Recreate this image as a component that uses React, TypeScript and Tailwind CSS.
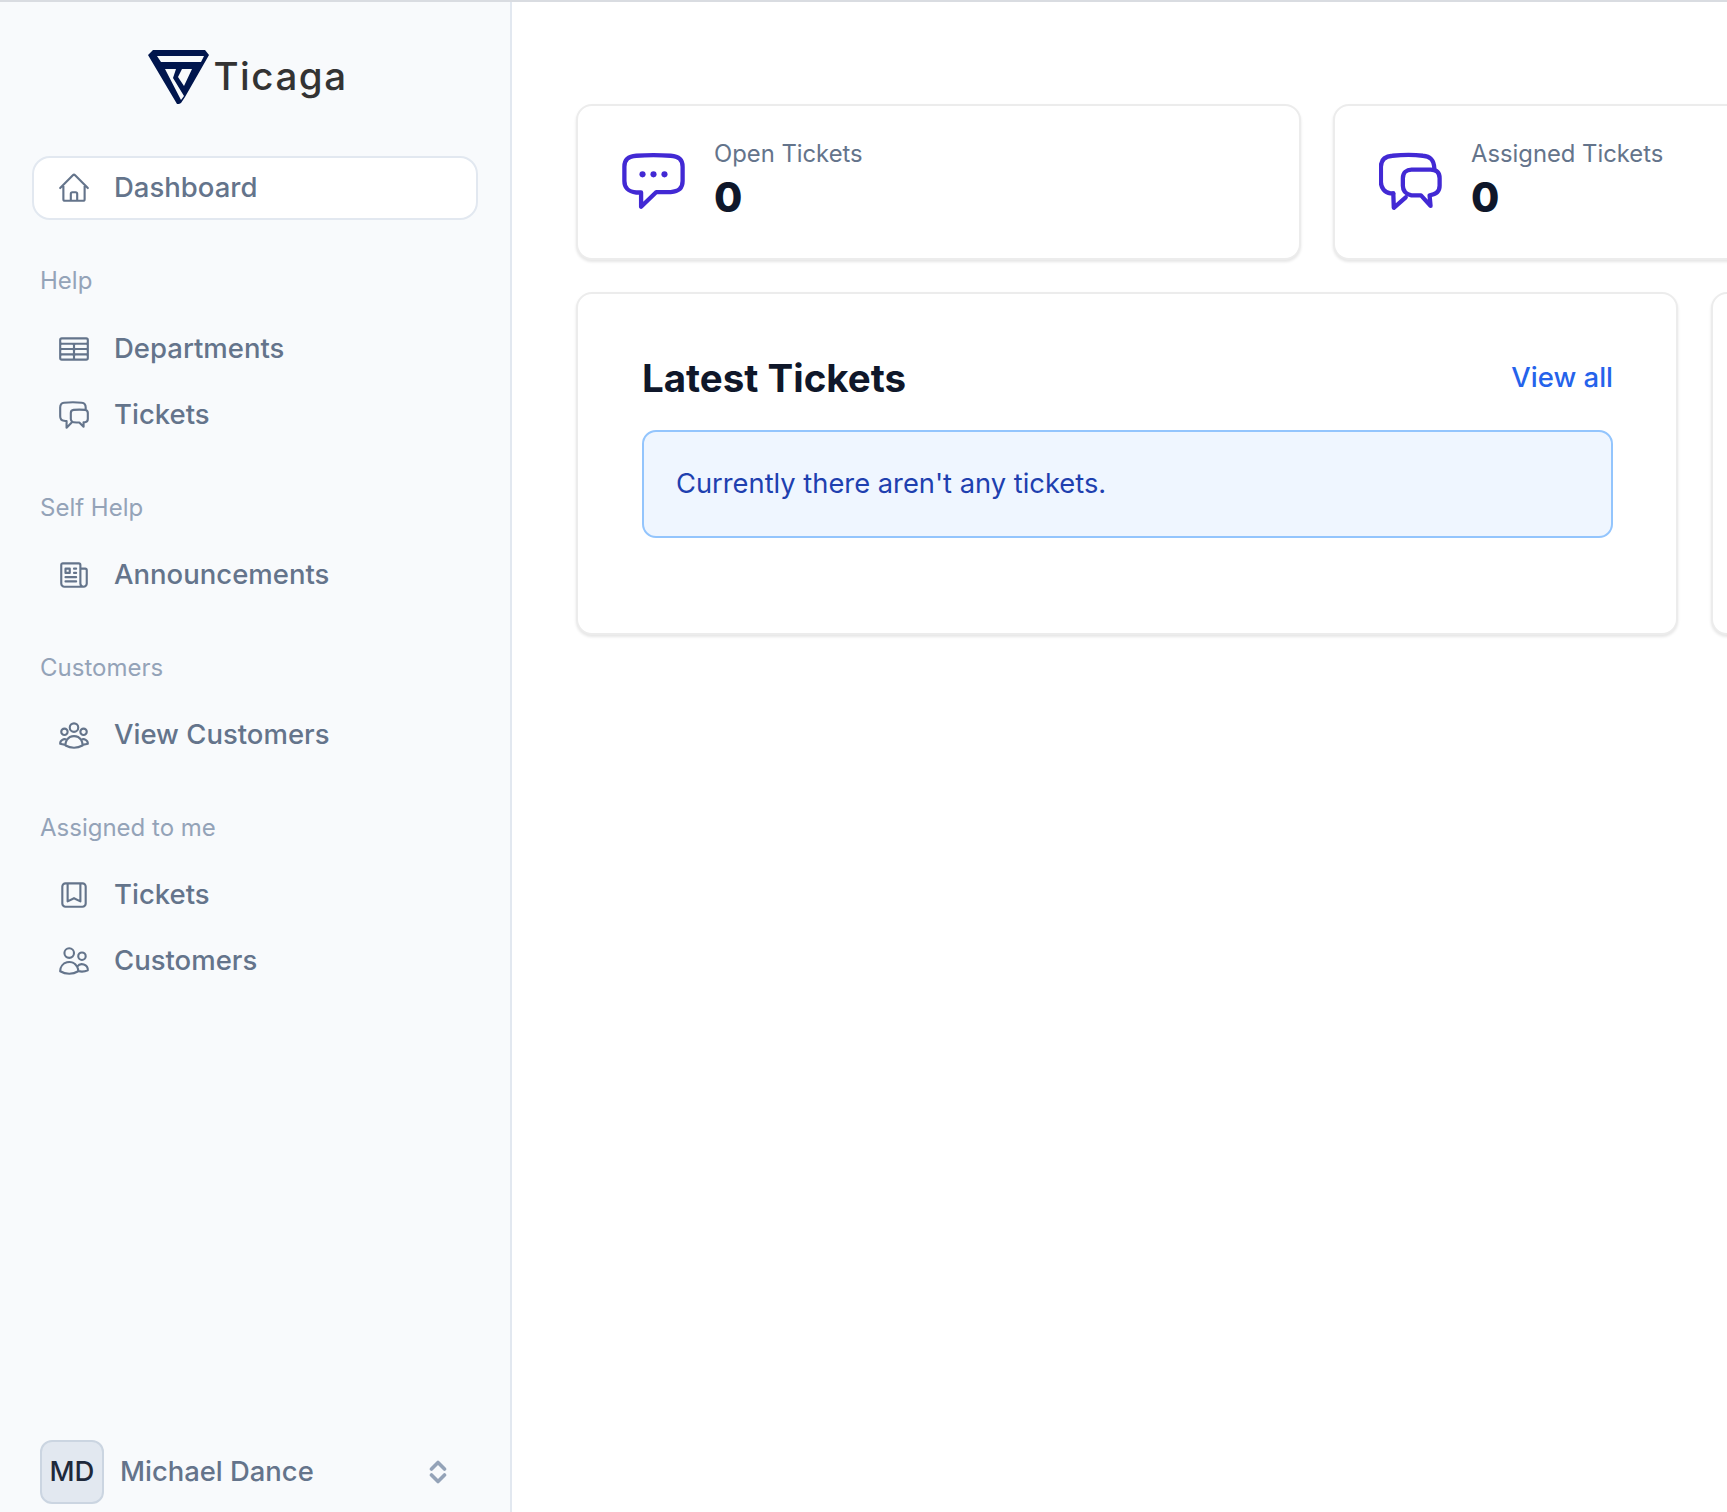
import { HiOutlineHome, HiOutlineTableCells, HiOutlineChatBubbleLeftRight, HiOutlineNewspaper, HiOutlineUserGroup, HiOutlineBookmarkSquare, HiOutlineUsers } from "react-icons/hi2";
import type { ReactNode } from "react";

function Logo() {
  return (
    <div className="flex justify-center items-start pt-[48px] pr-[14px] h-[154px]">
      <svg width="61" height="54" viewBox="0 0 61 54" className="shrink-0">
        <path
          fill="#00154d"
          fillRule="evenodd"
          d="M0 5 L5 0 H57 L61 5 L37 47 L33 53 L31 54 H29 Z M9 6 H56 L53 12 H13 Z M17 19 H28 L25 28 L36 46 L33 50 Z M34 19 H44 L36 36 L30 27 Z"
        />
      </svg>
      <span className="ml-[4px] mt-[7px] text-[#333] text-[38.5px] tracking-[1.5px] leading-none font-medium">Ticaga</span>
    </div>
  );
}

function Item({ icon, label, active }: { icon: ReactNode; label: string; active?: boolean }) {
  return (
    <div className={active ? "h-[64px] -mx-[1px] flex items-center pl-[23px] rounded-[18px] border-2 border-[#e2e8f0] bg-white" : "h-[66px] flex items-center pl-[24px]"}>
      <span className="w-[34px] h-[34px] flex items-center justify-center text-[#64748b] shrink-0">{icon}</span>
      <span className="ml-[23px] text-[27.5px] font-medium text-[#64748b] leading-none">{label}</span>
    </div>
  );
}

function Section({ title, children, first }: { title: string; children: ReactNode; first?: boolean }) {
  return (
    <div className={first ? "mt-[44px]" : "mt-[43px]"}>
      <div className="h-[34px] ml-[7px] flex items-center text-[24px] text-[#94a3b8]">{title}</div>
      <div className={first ? "mt-[18px] flex flex-col" : "mt-[17px] flex flex-col"}>{children}</div>
    </div>
  );
}

function BubbleOne() {
  return (
    <svg width="63" height="60" viewBox="0 0 66 60" fill="none" stroke="#4229d4" strokeWidth="4.5" strokeLinejoin="round" strokeLinecap="round">
      <path d="M2.5 14 C2.5 6 7 3 15 2.5 C27 1.5 39 1.5 51 2.5 C59 3 63.5 6 63.5 14 V29 C63.5 37 59 40 51 40.5 H36 L20 56 V41 H15 C7 40 2.5 37 2.5 29 Z" />
      <circle cx="21.5" cy="22" r="3.2" fill="#4229d4" stroke="none" />
      <circle cx="33" cy="22" r="3.2" fill="#4229d4" stroke="none" />
      <circle cx="44.5" cy="22" r="3.2" fill="#4229d4" stroke="none" />
    </svg>
  );
}

function BubbleTwo() {
  return (
    <svg width="63" height="60" viewBox="0 0 66 60" fill="none" stroke="#4229d4" strokeWidth="4.5" strokeLinejoin="round" strokeLinecap="round">
      <path d="M15 42 H12 C6 41 2 36 2 30 V14 C2 6 7 3 14 2.5 C24 1.5 38 1.5 46 2.5 C53 3 57.5 6 58 16" />
      <path d="M15 42 L15.5 57 L28 46" />
      <path d="M25 26 C25 20 29 17 34 17 H54 C60 17 63.5 20 63.5 26 V34 C63.5 40 60 43 53 44 L54 55 L44 44 H34 C29 43 25 40 25 34 Z" />
    </svg>
  );
}

function StatCard({ icon, label, cls }: { icon: ReactNode; label: string; cls: string }) {
  return (
    <div className={"h-[156px] shrink-0 rounded-[16px] border-2 border-[#ececec] bg-white shadow-[0_2px_3px_rgba(0,0,0,0.1)] flex items-center pl-[44px] " + cls}>
      <div>{icon}</div>
      <div className="ml-[29px] -mt-[3px]">
        <div className="text-[23.8px] leading-[30px] text-[#64748b]">{label}</div>
        <div className="mt-[3px] text-[41px] leading-[50px] font-extrabold text-[#0f172a]">0</div>
      </div>
    </div>
  );
}

export default function App() {
  return (
    <div className="h-screen w-full overflow-hidden bg-white border-t-2 border-[#d9dce1] flex font-['Inter',sans-serif]">
      <aside className="w-[512px] shrink-0 h-full bg-[#f8fafc] border-r-2 border-[#e2e8f0] flex flex-col px-[33px]">
        <Logo />
        <Item active label="Dashboard" icon={<HiOutlineHome size={34} />} />
        <Section first title="Help">
          <Item label="Departments" icon={<HiOutlineTableCells size={34} />} />
          <Item label="Tickets" icon={<HiOutlineChatBubbleLeftRight size={34} />} />
        </Section>
        <Section title="Self Help">
          <Item label="Announcements" icon={<HiOutlineNewspaper size={34} />} />
        </Section>
        <Section title="Customers">
          <Item label="View Customers" icon={<HiOutlineUserGroup size={34} />} />
        </Section>
        <Section title="Assigned to me">
          <Item label="Tickets" icon={<HiOutlineBookmarkSquare size={34} />} />
          <Item label="Customers" icon={<HiOutlineUsers size={34} />} />
        </Section>
        <div className="mt-auto mb-[8px] ml-[7px] flex items-center">
          <div className="w-[64px] h-[64px] rounded-[12px] bg-[#e2e8f0] border-2 border-[#cbd5e1] flex items-center justify-center text-[27.5px] font-medium text-[#1e293b]">MD</div>
          <span className="ml-[16px] text-[27.4px] font-medium text-[#64748b]">Michael Dance</span>
          <svg width="18" height="26" viewBox="0 0 18 26" fill="none" stroke="#94a3b8" strokeWidth="3.6" strokeLinecap="round" strokeLinejoin="round" className="ml-auto mr-[30px]">
            <path d="M2.5 10 L9 3.5 L15.5 10" />
            <path d="M2.5 16 L9 22.5 L15.5 16" />
          </svg>
        </div>
      </aside>
      <main className="flex-1 min-w-0 overflow-hidden pl-[64px] pt-[102px]">
        <div className="flex gap-[32px] w-[2000px]">
          <StatCard cls="w-[725px]" label="Open Tickets" icon={<BubbleOne />} />
          <StatCard cls="w-[725px]" label="Assigned Tickets" icon={<BubbleTwo />} />
        </div>
        <div className="flex gap-[33px] mt-[32px] w-[2400px]">
          <div className="w-[1102px] h-[343px] shrink-0 rounded-[16px] border-2 border-[#ececec] bg-white shadow-[0_2px_3px_rgba(0,0,0,0.1)] pl-[64px] pr-[63px] pt-[59px]">
            <div className="flex items-center justify-between h-[50px]">
              <h2 className="text-[38.5px] font-bold text-[#0f172a] leading-none">Latest Tickets</h2>
              <a className="text-[27.5px] font-medium text-[#2563eb]">View all</a>
            </div>
            <div className="mt-[27px] h-[108px] rounded-[14px] border-2 border-[#93c5fd] bg-[#eff6ff] flex items-center pl-[32px] text-[27.3px] text-[#1e40af]">Currently there aren't any tickets.</div>
          </div>
          <div className="w-[800px] h-[343px] shrink-0 rounded-[16px] border-2 border-[#ececec] bg-white shadow-[0_2px_3px_rgba(0,0,0,0.1)]" />
        </div>
      </main>
    </div>
  );
}
